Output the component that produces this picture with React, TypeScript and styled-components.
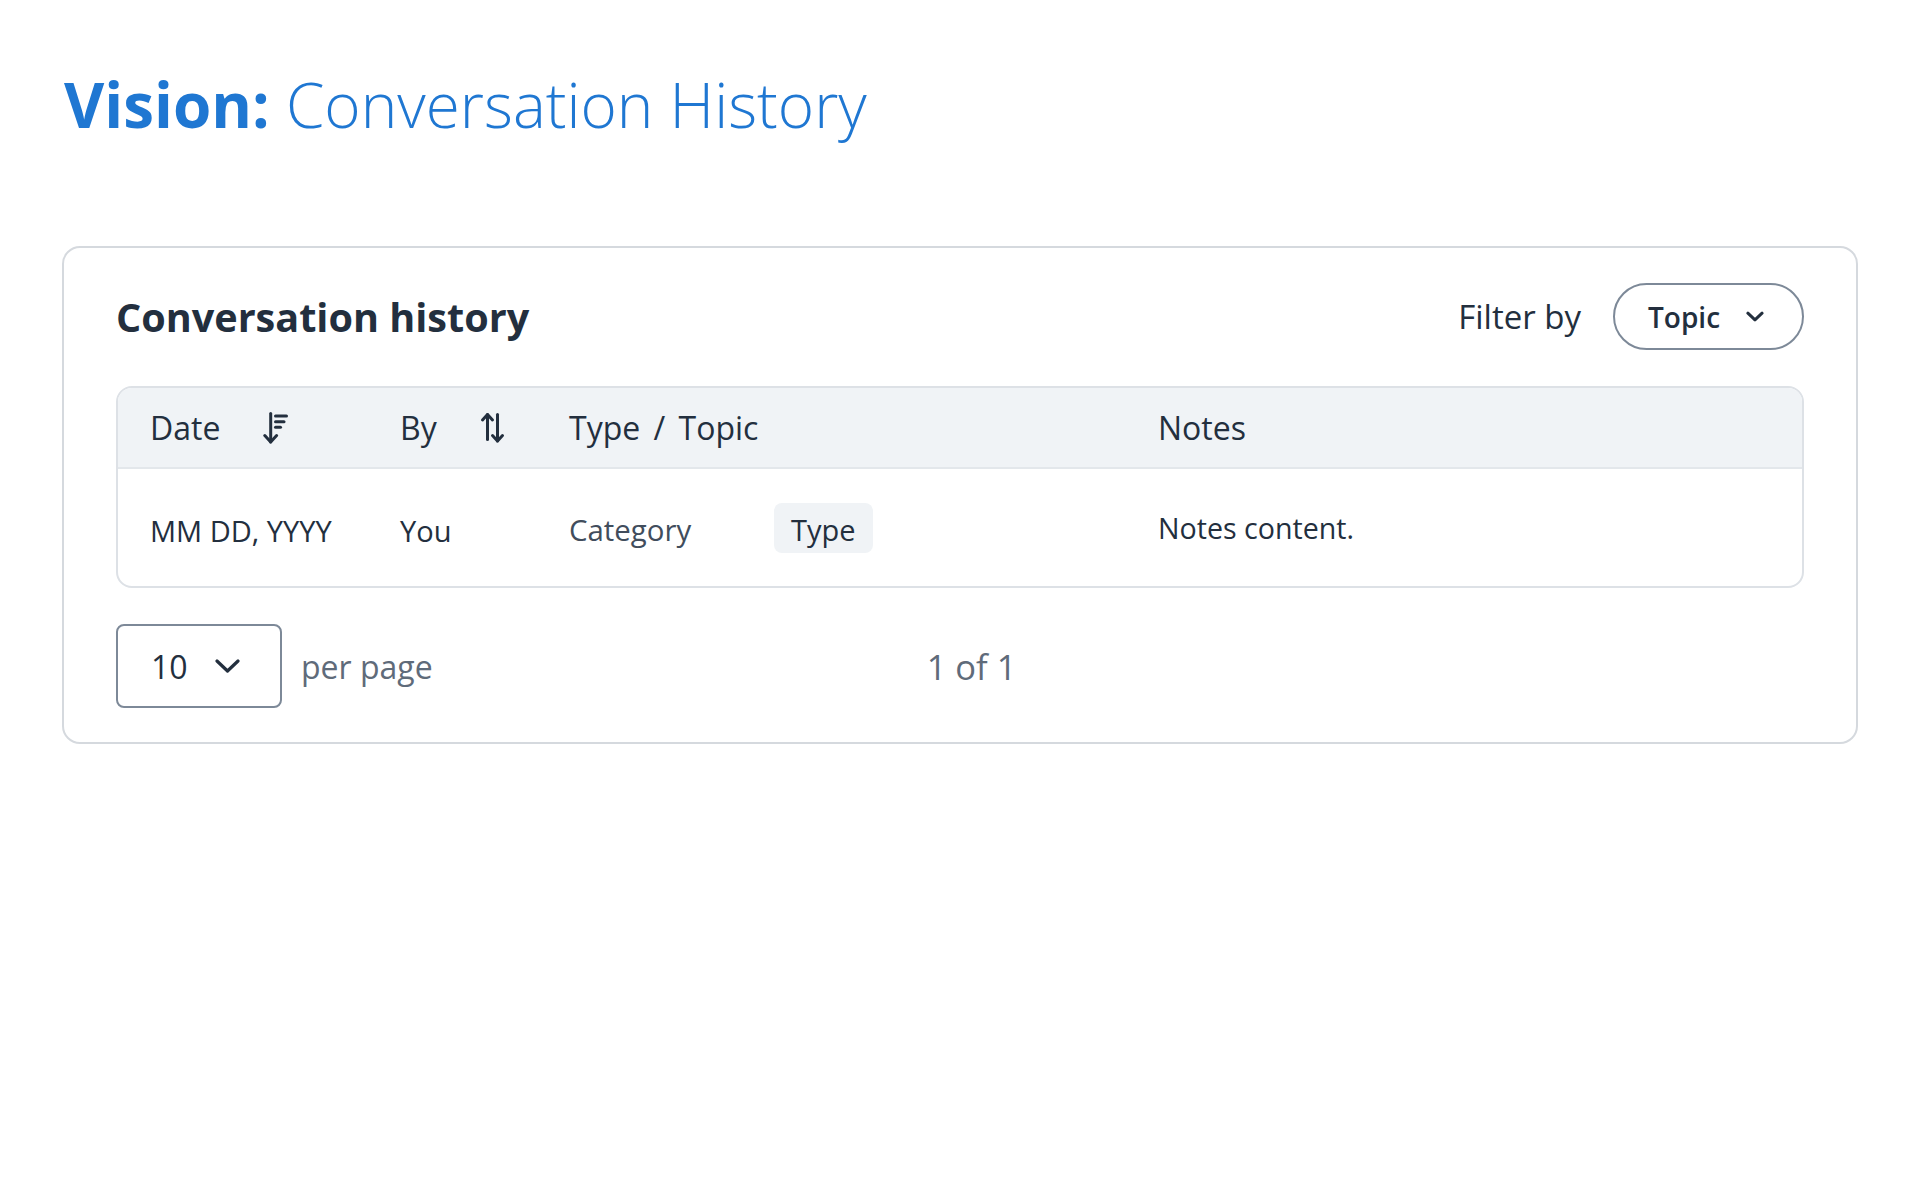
import React from 'react';
import styled, { createGlobalStyle } from 'styled-components';

const GlobalStyle = createGlobalStyle`
  html, body {
    margin: 0;
    padding: 0;
    background: #ffffff;
  }
  body {
    font-family: 'Open Sans', 'Noto Sans', 'Liberation Sans', sans-serif;
    color: #232f3e;
  }
`;

const SortDescIcon: React.FC = () => (
  <svg width="26" height="34" viewBox="0 0 26 34" fill="none" stroke="currentColor" strokeWidth="3" strokeLinecap="round" strokeLinejoin="round">
    <line x1="7.7" y1="2.5" x2="7.7" y2="31" />
    <polyline points="1.8,24.5 7.7,31 13.6,24.5" />
    <line x1="12.5" y1="5" x2="23.5" y2="5" />
    <line x1="12.5" y1="10.7" x2="21" y2="10.7" />
    <line x1="12.5" y1="16.3" x2="17.5" y2="16.3" />
  </svg>
);

const SortBothIcon: React.FC = () => (
  <svg width="28" height="34" viewBox="0 0 28 34" fill="none" stroke="currentColor" strokeWidth="3" strokeLinecap="round" strokeLinejoin="round">
    <line x1="7.5" y1="3.5" x2="7.5" y2="28.5" />
    <polyline points="2.5,9 7.5,3.5 12.5,9" />
    <line x1="17.5" y1="3.5" x2="17.5" y2="30" />
    <polyline points="12.5,24.5 17.5,30 22.5,24.5" />
  </svg>
);

const Chevron: React.FC<{ w: number; h: number }> = ({ w, h }) => (
  <svg width={w} height={h} viewBox={`0 0 ${w} ${h}`} fill="none" stroke="currentColor" strokeWidth="3.2" strokeLinecap="round" strokeLinejoin="round">
    <polyline points={`2,2 ${w / 2},${h - 2} ${w - 2},2`} />
  </svg>
);

const rows = [
  { date: 'MM DD, YYYY', by: 'You', category: 'Category', type: 'Type', notes: 'Notes content.' },
];

const App: React.FC = () => {
  return (
    <Page>
      <GlobalStyle />
      <Title>
        <strong>Vision:</strong> Conversation History
      </Title>

      <Card>
        <CardHeader>
          <Heading>Conversation history</Heading>
          <FilterGroup>
            <FilterLabel>Filter by</FilterLabel>
            <PillButton>
              Topic
              <Chevron w={19} h={11} />
            </PillButton>
          </FilterGroup>
        </CardHeader>

        <Table>
          <HeaderRow>
            <HeaderCell>
              Date
              <SortButton>
                <SortDescIcon />
              </SortButton>
            </HeaderCell>
            <HeaderCell>
              By
              <SortButton>
                <SortBothIcon />
              </SortButton>
            </HeaderCell>
            <HeaderCell>Type / Topic</HeaderCell>
            <HeaderCell>Notes</HeaderCell>
          </HeaderRow>
          {rows.map((row, i) => (
            <BodyRow key={i}>
              <BodyCell $nudge>{row.date}</BodyCell>
              <BodyCell $nudge>{row.by}</BodyCell>
              <BodyCell $nudge>
                <CategoryText>{row.category}</CategoryText>
                <Badge>{row.type}</Badge>
              </BodyCell>
              <BodyCell $small>{row.notes}</BodyCell>
            </BodyRow>
          ))}
        </Table>

        <Pager>
          <PageSizeSelect>
            10
            <Chevron w={25} h={14} />
          </PageSizeSelect>
          <PagerText>per page</PagerText>
          <PageCount>1 of 1</PageCount>
        </Pager>
      </Card>
    </Page>
  );
};

const Page = styled.div`
  padding: 62px 62px 0;
`;

const Title = styled.h1`
  margin: 0 0 100px 2px;
  font-size: 62px;
  font-weight: 300;
  color: #1f77d2;
  line-height: normal;

  strong {
    font-weight: 700;
  }
`;

const Card = styled.section`
  border: 2px solid #d5d9de;
  border-radius: 18px;
  padding: 35px 52px 34px;
  display: flex;
  flex-direction: column;
  gap: 36px;
`;

const CardHeader = styled.div`
  display: flex;
  align-items: center;
  justify-content: space-between;
  height: 67px;
`;

const Heading = styled.h2`
  margin: 0;
  font-size: 39.6px;
  font-weight: 700;
  color: #232f3e;
`;

const FilterGroup = styled.div`
  display: flex;
  align-items: center;
  gap: 32px;
`;

const FilterLabel = styled.span`
  font-size: 33px;
  color: #232f3e;
`;

const PillButton = styled.button`
  display: flex;
  align-items: center;
  gap: 26px;
  box-sizing: border-box;
  height: 67px;
  width: 191px;
  padding: 0 38px 0 33px;
  border: 2px solid #7d8998;
  border-radius: 34px;
  background: #ffffff;
  color: #232f3e;
  font-family: inherit;
  font-size: 28px;
  font-weight: 600;
  cursor: pointer;
`;

const Table = styled.div`
  border: 2px solid #dde1e6;
  border-radius: 16px;
  overflow: hidden;
`;

const columns = '250px 169px 589px 1fr';

const HeaderRow = styled.div`
  display: grid;
  grid-template-columns: ${columns};
  height: 79px;
  background: #f0f3f6;
  border-bottom: 2px solid #e3e7eb;
`;

const HeaderCell = styled.div`
  display: flex;
  align-items: center;
  padding-left: 32px;
  font-size: 32px;
  word-spacing: 5px;
  color: #232f3e;
`;

const SortButton = styled.span`
  display: inline-flex;
  margin-left: 43px;
  color: #232f3e;
`;

const BodyRow = styled.div`
  display: grid;
  grid-template-columns: ${columns};
  height: 117px;
`;

const BodyCell = styled.div<{ $nudge?: boolean; $small?: boolean }>`
  display: flex;
  align-items: center;
  padding-left: 32px;
  padding-top: ${({ $nudge }) => ($nudge ? '5px' : '0')};
  font-size: ${({ $small }) => ($small ? '28.6px' : '29px')};
  color: #232f3e;
`;

const CategoryText = styled.span`
  width: 205px;
  font-size: 29.4px;
  color: #414d5c;
`;

const Badge = styled.span`
  display: inline-flex;
  align-items: center;
  box-sizing: border-box;
  height: 50px;
  padding: 3px 17px 0;
  border-radius: 8px;
  background: #f0f3f6;
  color: #232f3e;
  font-weight: 500;
  margin-top: -5px;
`;

const Pager = styled.div`
  display: flex;
  align-items: center;
`;

const PageSizeSelect = styled.div`
  display: flex;
  align-items: center;
  gap: 27px;
  box-sizing: border-box;
  width: 166px;
  height: 84px;
  padding: 0 38px 0 33px;
  border: 2px solid #7d8998;
  border-radius: 8px;
  font-size: 32px;
  color: #232f3e;
`;

const PagerText = styled.span`
  margin-left: 19px;
  font-size: 32px;
  color: #5f6b7a;
`;

const PageCount = styled.span`
  margin-left: 494px;
  font-size: 34.5px;
  color: #5f6b7a;
`;

export default App;
